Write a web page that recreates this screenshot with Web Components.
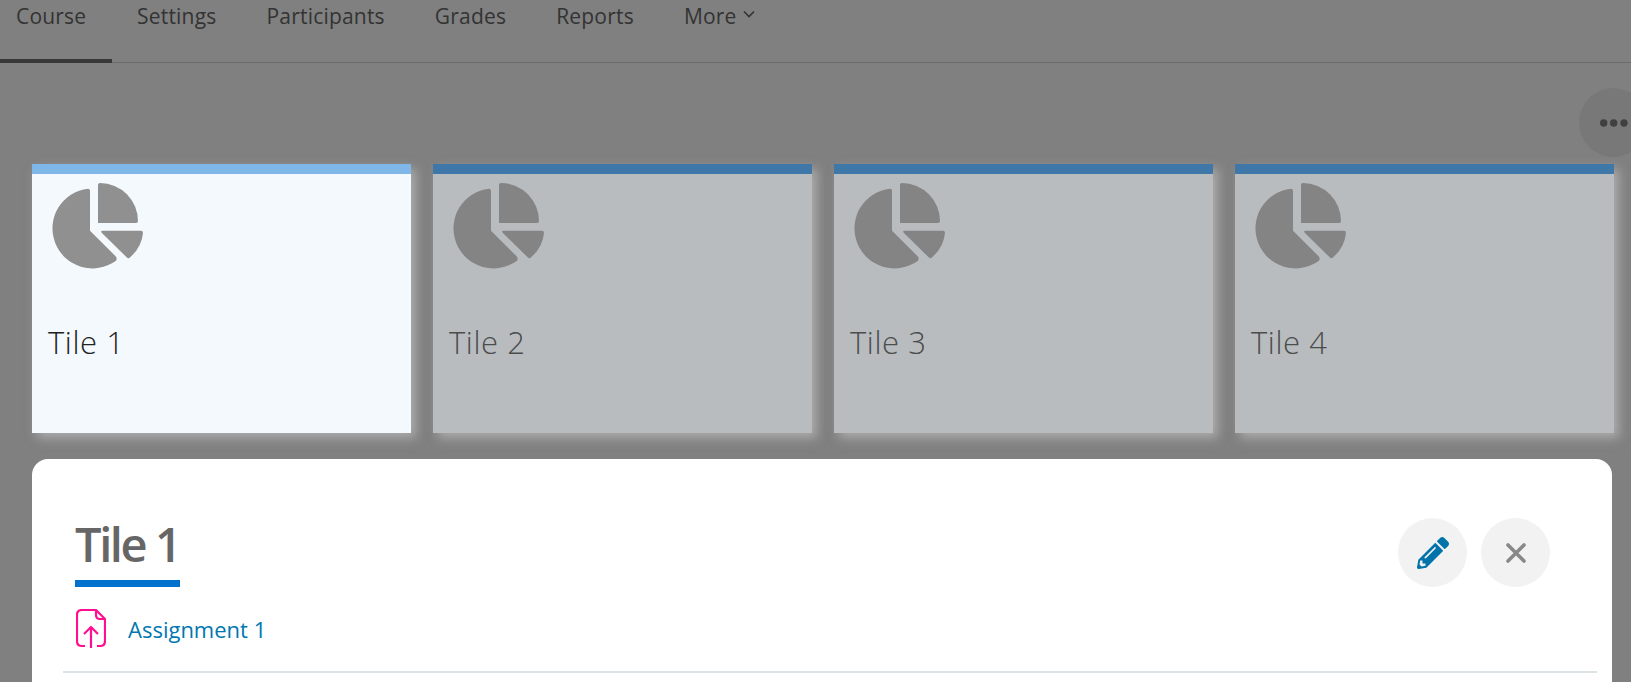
<!DOCTYPE html>
<html lang="en">
<head>
<meta charset="utf-8">
<title>Course</title>
<style>
  html, body {
    margin: 0;
    height: 682px;
    overflow: hidden;
    background: #808080;
    font-family: "Open Sans", "Noto Sans", sans-serif;
  }
</style>
</head>
<body>
<course-page>
  <nav-tabs slot="nav">
    <nav-tab active>Course</nav-tab>
    <nav-tab>Settings</nav-tab>
    <nav-tab>Participants</nav-tab>
    <nav-tab>Grades</nav-tab>
    <nav-tab>Reports</nav-tab>
    <nav-tab more>More</nav-tab>
  </nav-tabs>
  <round-button slot="tools" kind="dots"></round-button>
  <tile-item slot="tiles" active>Tile 1</tile-item>
  <tile-item slot="tiles">Tile 2</tile-item>
  <tile-item slot="tiles">Tile 3</tile-item>
  <tile-item slot="tiles">Tile 4</tile-item>
  <section-card slot="card" heading="Tile 1">
    <round-button slot="actions" kind="edit"></round-button>
    <round-button slot="actions" kind="close"></round-button>
    <activity-row>Assignment 1</activity-row>
  </section-card>
</course-page>

<script>
// Small helper, every element here has the same shadow setup.
const shadow = (el, html) => {
  el.attachShadow({ mode: 'open' }).innerHTML = html
}

customElements.define('course-page', class extends HTMLElement {
  constructor() {
    super()
    shadow(this, `
      <style>
        :host { display: block; }
        .tools { display: flex; justify-content: flex-end; margin: 25px -17px 7px 0; }
        .tiles { display: grid; grid-template-columns: repeat(4, 379px); gap: 22px; padding-left: 32px; }
        .card { padding: 26px 19px 0 32px; }
      </style>
      <slot name="nav"></slot>
      <div class="tools"><slot name="tools"></slot></div>
      <div class="tiles"><slot name="tiles"></slot></div>
      <div class="card"><slot name="card"></slot></div>
    `)
  }
})

customElements.define('nav-tabs', class extends HTMLElement {
  constructor() {
    super()
    shadow(this, `
      <style>
        :host {
          display: flex;
          height: 63px;
          box-sizing: border-box;
          border-bottom: 1px solid #6b6b6b;
        }
      </style>
      <slot></slot>
    `)
  }
})

customElements.define('nav-tab', class extends HTMLElement {
  constructor() {
    super()
    const chevron = this.hasAttribute('more')
      ? '<svg width="12" height="8" viewBox="0 0 12 8"><path d="M1 1.5l5 5 5-5" fill="none" stroke="#333" stroke-width="1.6"/></svg>'
      : ''
    shadow(this, `
      <style>
        :host {
          display: flex;
          align-items: flex-start;
          gap: 6px;
          height: 63px;
          box-sizing: border-box;
          padding: 0 25px;
          font-size: 21px;
          letter-spacing: .2px;
          line-height: 32px;
          color: #333;
        }
        :host([active]) {
          width: 112px;
          padding: 0 0 0 16px;
          border-bottom: 4px solid #383838;
        }
        svg { margin-top: 10px; }
      </style>
      <slot></slot>${chevron}
    `)
  }
})

customElements.define('round-button', class extends HTMLElement {
  constructor() {
    super()
    const icons = {
      dots: '<svg width="32" height="10" viewBox="0 0 32 10" fill="#404040"><circle cx="5.7" cy="5" r="3.7"/><circle cx="15.7" cy="5" r="3.7"/><circle cx="26" cy="5" r="3.7"/></svg>',
      edit: '<svg width="32" height="32" viewBox="0 0 512 512" fill="#0073aa"><path d="M497.9 142.1l-46.1 46.1c-4.7 4.7-12.3 4.7-17 0l-111-111c-4.7-4.7-4.7-12.3 0-17l46.1-46.1c18.7-18.7 49.1-18.7 67.9 0l60.1 60.1c18.8 18.7 18.8 49.1 0 67.9zM284.2 99.8L21.6 362.4.4 483.9c-2.9 16.4 11.4 30.6 27.8 27.8l121.5-21.3 262.6-262.6c4.7-4.7 4.7-12.3 0-17l-111-111c-4.8-4.7-12.4-4.7-17.1 0zM124.1 339.9c-5.5-5.5-5.5-14.3 0-19.8l154-154c5.5-5.5 14.3-5.5 19.8 0s5.5 14.3 0 19.8l-154 154c-5.5 5.5-14.3 5.5-19.8 0zM88 424h48v36.3l-64.5 11.3-31.1-31.1L51.7 376H88v48z"/></svg>',
      close: '<svg width="22" height="22" viewBox="0 0 22 22"><path d="M3 3l16 16M19 3L3 19" fill="none" stroke="#888" stroke-width="3.6" stroke-linecap="round"/></svg>'
    }
    shadow(this, `
      <style>
        :host {
          display: flex;
          align-items: center;
          justify-content: center;
          width: 69px;
          height: 69px;
          border-radius: 50%;
          background: #f2f2f2;
        }
        :host([kind="dots"]) { background: #787878; }
      </style>
      ${icons[this.getAttribute('kind')]}
    `)
  }
})

customElements.define('tile-item', class extends HTMLElement {
  constructor() {
    super()
    shadow(this, `
      <style>
        :host {
          display: block;
          height: 269px;
          box-sizing: border-box;
          border-top: 10px solid #4077a9;
          padding: 9px 0 0 16px;
          background: #b8bcbf;
          color: #4c4c4c;
          box-shadow: 5px 5px 10px rgba(200, 200, 200, .6);
        }
        :host([active]) {
          border-top-color: #7fb8e8;
          background: #f4f9fd;
          color: #222;
        }
        svg { display: block; margin-left: 5px; fill: #848484; overflow: visible; }
        :host([active]) svg { fill: #909090; }
        .name { margin-top: 54px; font-size: 31px; font-weight: 300; letter-spacing: .6px; line-height: 40px; }
      </style>
      <svg width="90" height="85.3" viewBox="100 40 270 256">
        <path d="M205 57Q211 57 211 63V183L288 260Q294 267 288 274A120 120 0 1 1 205 57Z"/>
        <path d="M235 46Q235 40 241 40A114 114 0 0 1 355 154Q355 160 349 160H235Z"/>
        <path d="M248 183H364Q370 183 370 190Q366 234 330 264Q325 268 321 263L246 189Q242 183 248 183Z"/>
      </svg>
      <div class="name"><slot></slot></div>
    `)
  }
})

customElements.define('section-card', class extends HTMLElement {
  constructor() {
    super()
    shadow(this, `
      <style>
        :host {
          display: block;
          height: 260px;
          background: #fff;
          border-radius: 16px;
          padding: 59px 15px 0 31px;
          box-sizing: border-box;
        }
        header { display: flex; justify-content: space-between; align-items: flex-start; padding: 0 47px 0 12px; }
        .actions { display: flex; gap: 14px; }
        h2 {
          margin: 0;
          padding-bottom: 10px;
          border-bottom: 7px solid #0072ce;
          font-size: 47px;
          font-weight: 600;
          line-height: 52px;
          letter-spacing: -2.4px;
          color: #666;
        }
      </style>
      <header>
        <h2>${this.getAttribute('heading')}</h2>
        <div class="actions"><slot name="actions"></slot></div>
      </header>
      <slot></slot>
    `)
  }
})

customElements.define('activity-row', class extends HTMLElement {
  constructor() {
    super()
    shadow(this, `
      <style>
        :host {
          display: flex;
          align-items: flex-start;
          gap: 22px;
          height: 64px;
          margin-top: 22px;
          padding-left: 13px;
          box-sizing: border-box;
          border-bottom: 2px solid #dde2e6;
          font-size: 22px;
          line-height: 40px;
          color: #0077b0;
        }
      </style>
      <svg width="30" height="39" viewBox="0 0 30 39" fill="none" stroke="#ff0f8f" stroke-width="2.2" stroke-linejoin="round">
        <path d="M9 37H6Q1 37 1 32V6Q1 1 6 1H20L29 10V32Q29 37 24 37H21"/>
        <path d="M20 1V6Q20 10 24 10H29"/>
        <path d="M15 39V18M8 25l7-7 7 7"/>
      </svg>
      <span><slot></slot></span>
    `)
  }
})
</script>
</body>
</html>
